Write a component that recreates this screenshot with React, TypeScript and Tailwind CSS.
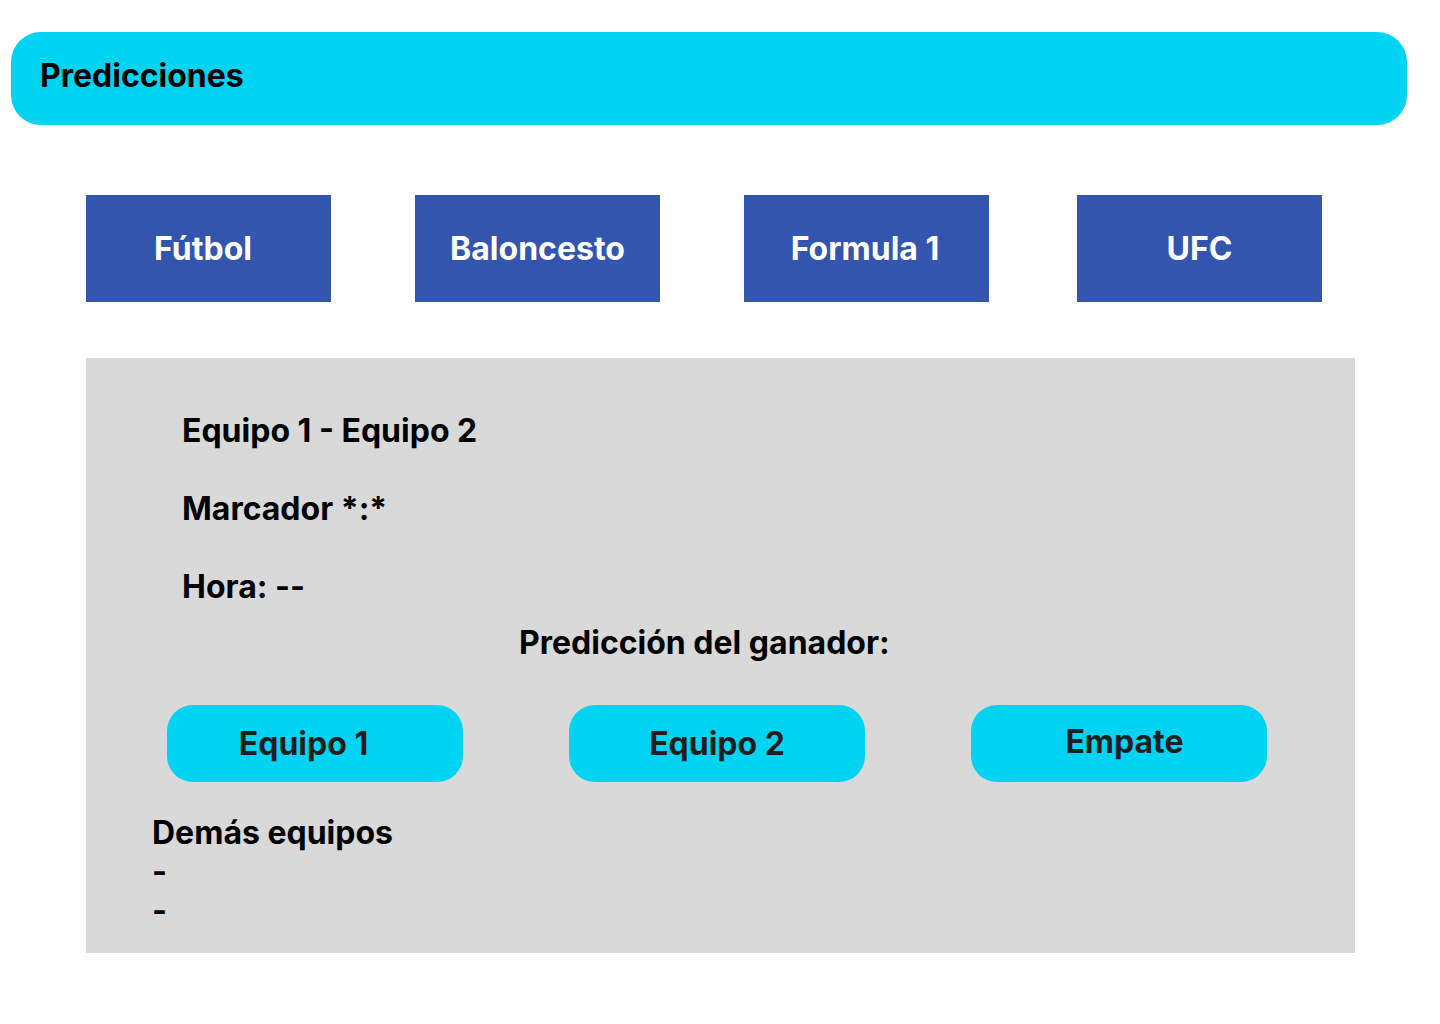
export default function App() {
  const tabs = [
    { id: "futbol", label: "Fútbol", extra: "ml-0 pr-[11px]" },
    { id: "baloncesto", label: "Baloncesto", extra: "ml-[84px]" },
    { id: "f1", label: "Formula 1", extra: "ml-[84px] pr-[3px]" },
    { id: "ufc", label: "UFC", extra: "ml-[88px]" },
  ];

  const picks = [
    { label: "Equipo 1", extra: "pr-[23px]" },
    { label: "Equipo 2", extra: "" },
    { label: "Empate", extra: "pl-[11px] pb-[5px]" },
  ];

  return (
    <div className="min-h-[1024px] w-[1440px] bg-white font-['Inter',sans-serif] text-black">
      {/* Top bar */}
      <div className="pt-8 pl-[11px]">
        <header className="flex h-[93px] w-[1396px] items-center rounded-[30px] bg-[#00d4f2] pb-[6px] pl-[29px]">
          <h1 className="text-[32px] font-bold leading-[39px]">Predicciones</h1>
        </header>
      </div>

      {/* Sport tabs */}
      <nav className="mt-[70px] flex pl-[86px]">
        {tabs.map((tab) => (
          <button
            key={tab.id}
            className={`${tab.extra} flex h-[107px] w-[245px] items-center justify-center bg-[#3355ad] text-[32px] font-bold leading-[39px] text-white`}
          >
            {tab.label}
          </button>
        ))}
      </nav>

      {/* Match panel */}
      <section className="ml-[86px] mt-[56px] h-[595px] w-[1269px] bg-[#d9d9d9] pt-[53px] text-[32px] font-bold leading-[39px]">
        <div className="flex flex-col gap-[39px] pl-[96px]">
          <p>Equipo 1 - Equipo 2</p>
          <p>Marcador *:*</p>
          <p>Hora: --</p>
        </div>

        <p className="mt-[17px] pl-[433px]">Predicción del ganador:</p>

        <div className="mt-[43px] flex gap-[106px] pl-[81px]">
          {picks.map((pick) => (
            <button
              key={pick.label}
              className={`${pick.extra} flex h-[77px] w-[296px] items-center justify-center rounded-[26px] bg-[#00d4f2] text-[32px] font-bold text-[#1e1e1e]`}
            >
              {pick.label}
            </button>
          ))}
        </div>

        <div className="mt-[31px] pl-[66px]">
          <p>Demás equipos</p>
          <p>-</p>
          <p>-</p>
        </div>
      </section>
    </div>
  );
}
